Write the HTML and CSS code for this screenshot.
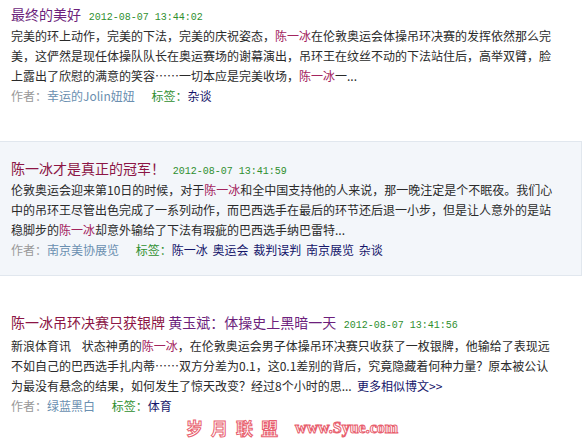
FILE: index.html
```html
<!DOCTYPE html>
<html>
<head>
    <title>相关博文</title>
    <meta charset="UTF-8">
    <link rel="stylesheet" href="styles.css">
</head>
<body>
    <div class="list">
        <div class="post">
            <div class="post-title">
                <a class="title visited" href="#">最终的美好</a>
                <span class="date">2012-08-07 13:44:02</span>
            </div>
            <p class="summary">完美的环上动作，完美的下法，完美的庆祝姿态，<em>陈一冰</em>在伦敦奥运会体操吊环决赛的发挥依然那么完美，这俨然是现任体操队队长在奥运赛场的谢幕演出，吊环王在纹丝不动的下法站住后，高举双臂，脸上露出了欣慰的满意的笑容……一切本应是完美收场，<em>陈一冰</em>一...</p>
            <div class="meta">
                <span class="label">作者：</span><a class="author" href="#">幸运的Jolin妞妞</a>
                <span class="tag-label">标签：</span><a class="tag" href="#">杂谈</a>
            </div>
        </div>

        <div class="post post-hl">
            <div class="post-title">
                <a class="title" href="#">陈一冰才是真正的冠军！</a>
                <span class="date">2012-08-07 13:41:59</span>
            </div>
            <p class="summary">伦敦奥运会迎来第10日的时候，对于<em>陈一冰</em>和全中国支持他的人来说，那一晚注定是个不眠夜。我们心中的吊环王尽管出色完成了一系列动作，而巴西选手在最后的环节还后退一小步，但是让人意外的是站稳脚步的<em>陈一冰</em>却意外输给了下法有瑕疵的巴西选手纳巴雷特...</p>
            <div class="meta">
                <span class="label">作者：</span><a class="author" href="#">南京美协展览</a>
                <span class="tag-label">标签：</span><a class="tag" href="#">陈一冰</a>
                <a class="tag" href="#">奥运会</a>
                <a class="tag" href="#">裁判误判</a>
                <a class="tag" href="#">南京展览</a>
                <a class="tag" href="#">杂谈</a>
            </div>
        </div>

        <div class="post">
            <div class="post-title">
                <a class="title" href="#">陈一冰吊环决赛只获银牌</a><a class="title visited" href="#">&nbsp;黄玉斌：体操史上黑暗一天</a>
                <span class="date">2012-08-07 13:41:56</span>
            </div>
            <p class="summary">新浪体育讯&nbsp;&nbsp;&nbsp;&nbsp;状态神勇的<em>陈一冰</em>，在伦敦奥运会男子体操吊环决赛只收获了一枚银牌，他输给了表现远不如自己的巴西选手扎内蒂……双方分差为0.1，这0.1差别的背后，究竟隐藏着何种力量？原本被公认为最没有悬念的结果，如何发生了惊天改变？经过8个小时的思...&nbsp;&nbsp;<a class="more" href="#">更多相似博文&gt;&gt;</a></p>
            <div class="meta">
                <span class="label">作者：</span><a class="author" href="#">绿蓝黑白</a>
                <span class="tag-label">标签：</span><a class="tag" href="#">体育</a>
            </div>
        </div>
    </div>

    <div class="watermark">
        <span class="wm-cn">岁月联盟</span>
        <span class="wm-en">www.Syue.com</span>
    </div>
</body>
</html>
```

FILE: styles.css
```css
body {
    margin: 0;
    background: #fff;
    font-family: "Noto Sans CJK SC", "Noto Sans", sans-serif;
    font-size: 12px;
    color: #2a2a2a;
}
a {
    text-decoration: none;
}
.list {
    width: 583px;
}
.post {
    padding: 4px 0 0 11px;
    margin-bottom: 35px;
    width: 545px;
}
.post-hl {
    width: 560px;
    padding: 16px 10px 15px 11px;
    background-color: #f3f6fa;
    border: 1px solid #e1e7ee;
    border-left: none;
    margin-bottom: 32px;
}
.post-hl .summary {
    width: 545px;
}
.post-title {
    height: 20px;
    line-height: 20px;
    margin-bottom: 2px;
}
.post:last-child .post-title {
    margin-bottom: 4px;
}
.title {
    font-size: 14px;
    color: #8c1545;
}
.title.visited {
    color: #6d1f7c;
}
.date {
    font-family: "Liberation Mono", monospace;
    font-size: 10px;
    color: #2f8f2f;
    margin-left: 5px;
}
.summary {
    margin: 0;
    line-height: 20px;
}
.summary em {
    font-style: normal;
    color: #a3245e;
}
.meta {
    line-height: 20px;
}
.label {
    color: #999;
}
.author {
    color: #6a8fb0;
}
.tag-label {
    color: #2f8f2f;
    margin-left: 14px;
}
.tag {
    color: #15156a;
    margin-right: 2px;
}
.more {
    color: #15156a;
}
.watermark {
    position: absolute;
    left: 186px;
    top: 415px;
    display: flex;
    align-items: center;
    gap: 9px;
}
.wm-cn {
    font-size: 17px;
    font-weight: bold;
    letter-spacing: 8px;
    color: #fff;
    -webkit-text-stroke: 1px #e8606e;
}
.wm-en {
    font-family: "Liberation Serif", serif;
    font-size: 16px;
    font-weight: bold;
    color: #fff;
    -webkit-text-stroke: 1px #e8606e;
}
```
